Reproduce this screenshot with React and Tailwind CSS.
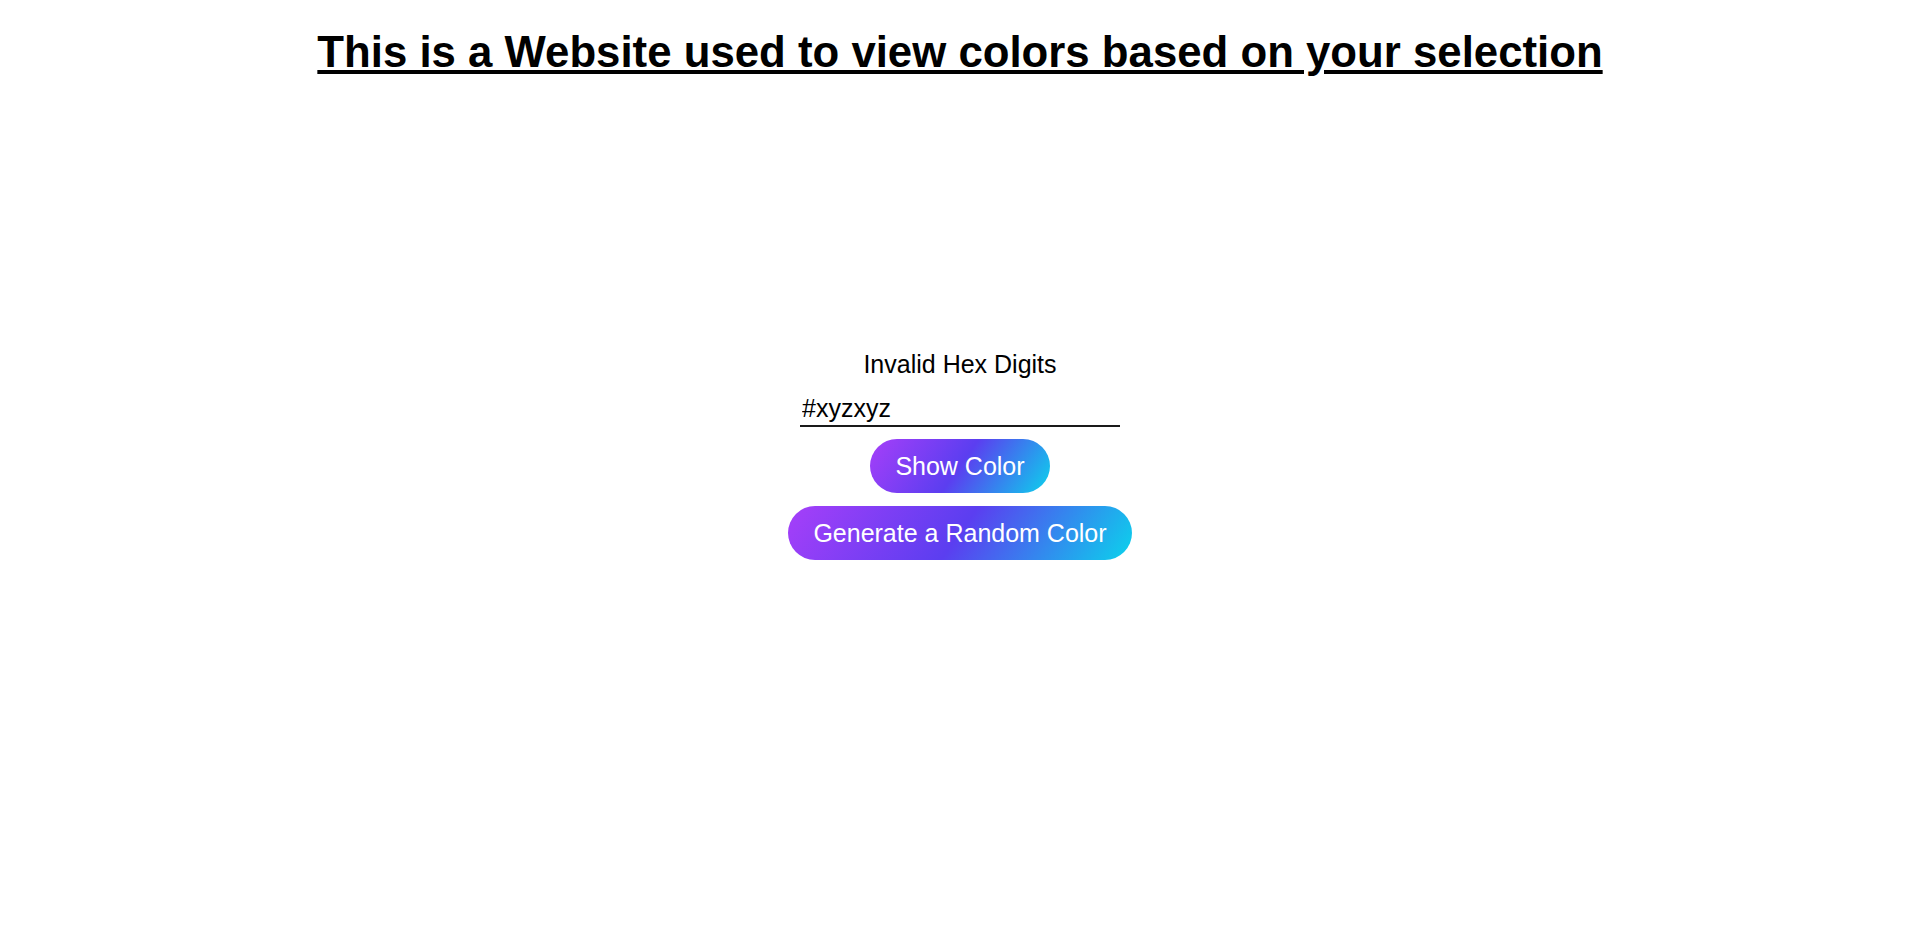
import { useState } from "react";

const btnClass =
  "rounded-full bg-[linear-gradient(125deg,#a63ff9_0%,#5b3ef0_50%,#0bd3ec_100%)] px-[25px] py-[12.5px] text-[25px] leading-[29px] text-white";

export default function App() {
  const [hex, setHex] = useState("#xyzxyz");

  return (
    <div className="min-h-[938px] w-full bg-white font-['Liberation_Sans',Arial,sans-serif] text-black">
      {/* heading */}
      <h1 className="pt-[27px] text-center text-[43.75px] font-bold leading-[50px] underline">
        This is a Website used to view colors based on your selection
      </h1>

      {/* form */}
      <div className="mt-[273px] flex flex-col items-center">
        <p className="text-[25px] leading-[29px]">Invalid Hex Digits</p>

        <input
          type="text"
          value={hex}
          onChange={(e) => setHex(e.target.value)}
          className="mt-[13px] w-[320px] border-b-2 border-[#1a1a1a] bg-transparent px-[2px] py-[2px] text-[25px] leading-[29px] text-black outline-none"
        />

        <button type="button" className={`mt-[12px] ${btnClass}`}>
          Show Color
        </button>

        <button type="button" className={`mt-[13px] ${btnClass}`}>
          Generate a Random Color
        </button>
      </div>
    </div>
  );
}
